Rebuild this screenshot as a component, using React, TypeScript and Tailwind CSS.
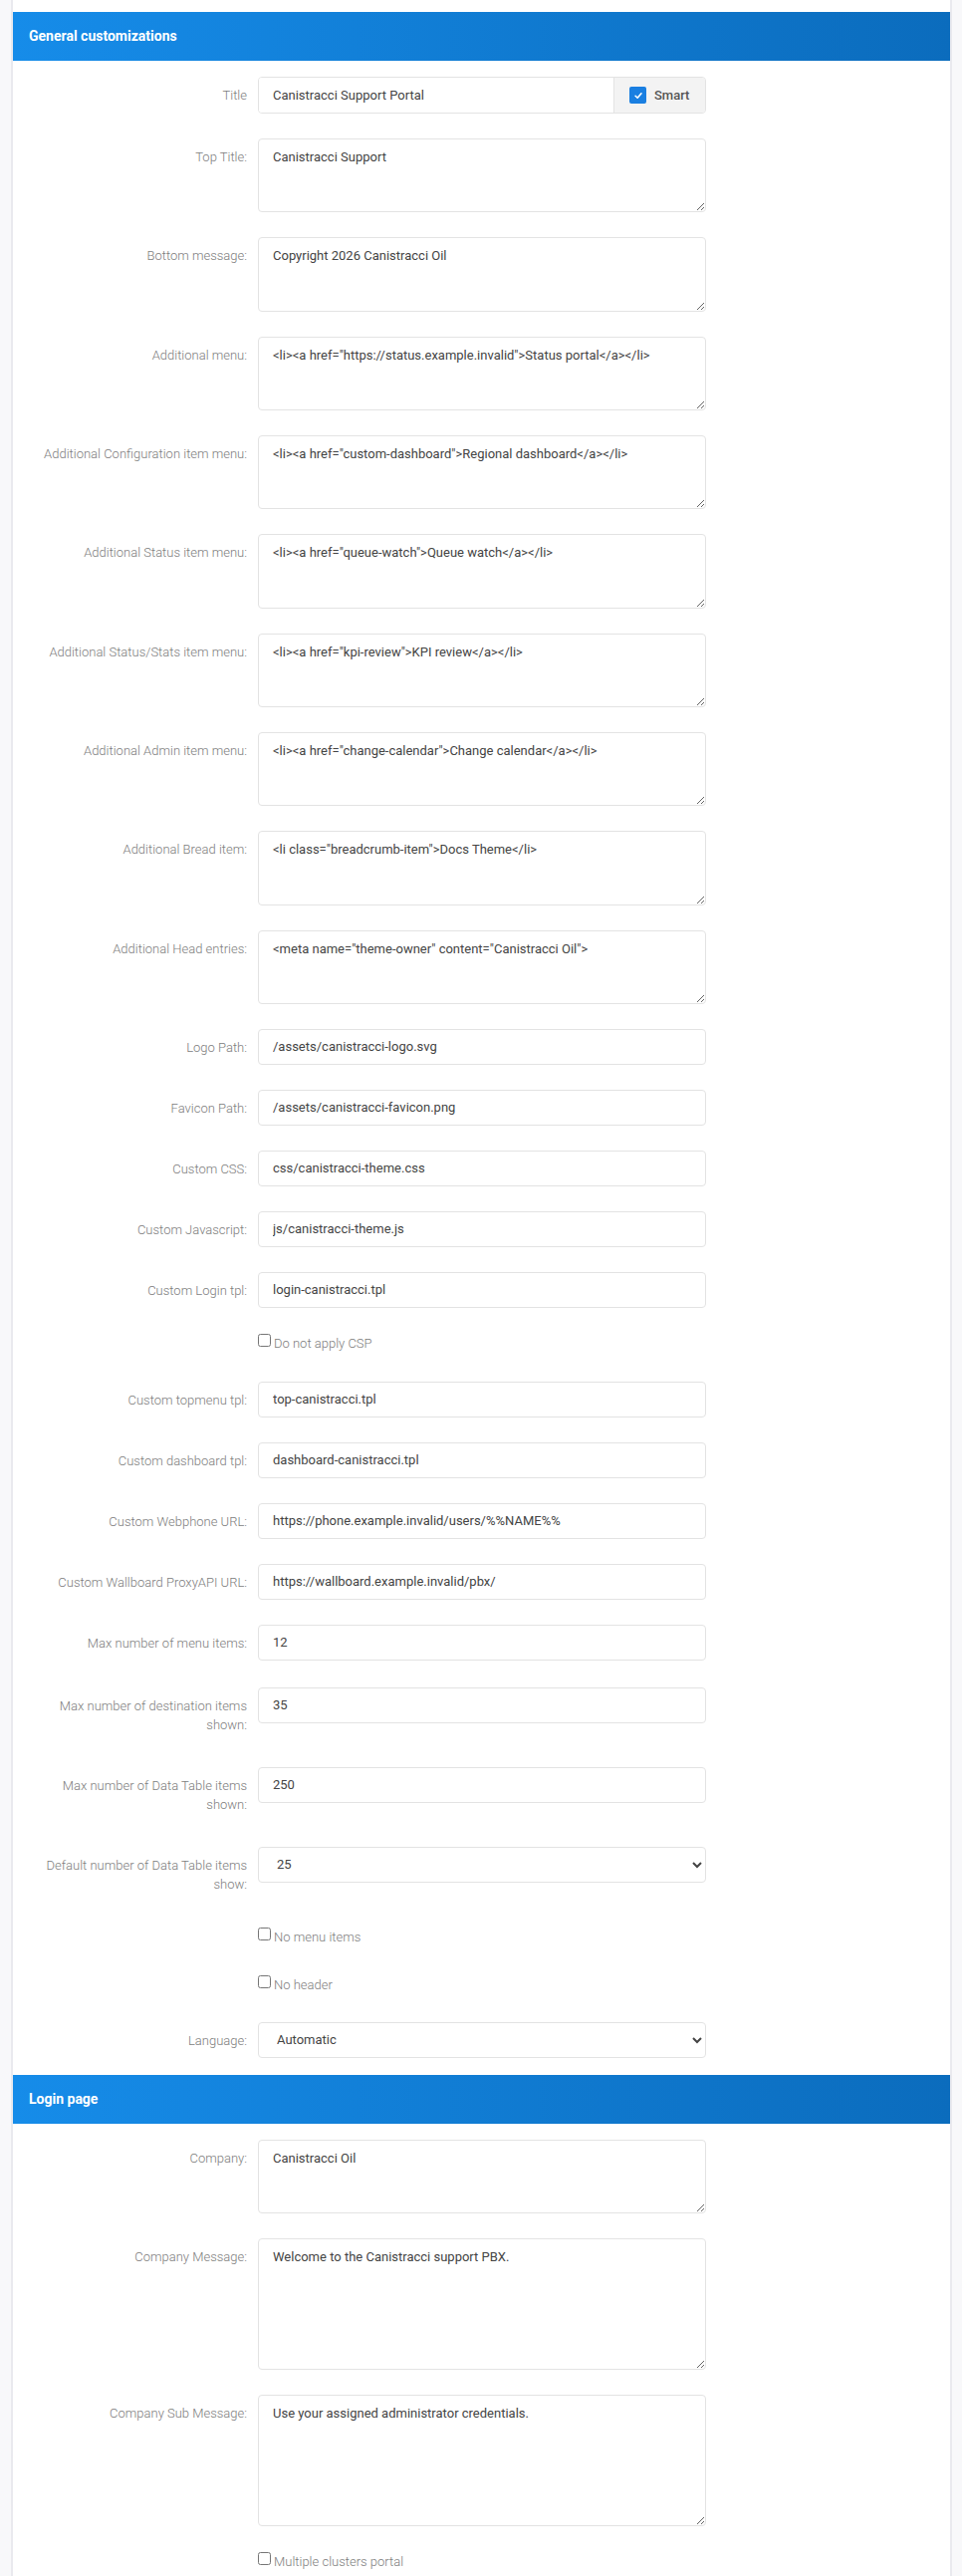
import React from "react";

type Row =
  | { kind: "title"; label: string; value: string }
  | { kind: "input"; label: string[]; value: string; gap?: string }
  | { kind: "textarea"; label: string[]; value: string; tall?: boolean }
  | { kind: "select"; label: string[]; value: string; options: string[] }
  | { kind: "check"; text: string; gap?: string };

const general: Row[] = [
  { kind: "title", label: "Title", value: "Canistracci Support Portal" },
  { kind: "textarea", label: ["Top Title:"], value: "Canistracci Support" },
  { kind: "textarea", label: ["Bottom message:"], value: "Copyright 2026 Canistracci Oil" },
  {
    kind: "textarea",
    label: ["Additional menu:"],
    value: '<li><a href="https://status.example.invalid">Status portal</a></li>',
  },
  {
    kind: "textarea",
    label: ["Additional Configuration item menu:"],
    value: '<li><a href="custom-dashboard">Regional dashboard</a></li>',
  },
  {
    kind: "textarea",
    label: ["Additional Status item menu:"],
    value: '<li><a href="queue-watch">Queue watch</a></li>',
  },
  {
    kind: "textarea",
    label: ["Additional Status/Stats item menu:"],
    value: '<li><a href="kpi-review">KPI review</a></li>',
  },
  {
    kind: "textarea",
    label: ["Additional Admin item menu:"],
    value: '<li><a href="change-calendar">Change calendar</a></li>',
  },
  {
    kind: "textarea",
    label: ["Additional Bread item:"],
    value: '<li class="breadcrumb-item">Docs Theme</li>',
  },
  {
    kind: "textarea",
    label: ["Additional Head entries:"],
    value: '<meta name="theme-owner" content="Canistracci Oil">',
  },
  { kind: "input", label: ["Logo Path:"], value: "/assets/canistracci-logo.svg" },
  { kind: "input", label: ["Favicon Path:"], value: "/assets/canistracci-favicon.png" },
  { kind: "input", label: ["Custom CSS:"], value: "css/canistracci-theme.css" },
  { kind: "input", label: ["Custom Javascript:"], value: "js/canistracci-theme.js" },
  { kind: "input", label: ["Custom Login tpl:"], value: "login-canistracci.tpl" },
  { kind: "check", text: "Do not apply CSP", gap: "mb-[26px]" },
  { kind: "input", label: ["Custom topmenu tpl:"], value: "top-canistracci.tpl" },
  { kind: "input", label: ["Custom dashboard tpl:"], value: "dashboard-canistracci.tpl" },
  {
    kind: "input",
    label: ["Custom Webphone URL:"],
    value: "https://phone.example.invalid/users/%%NAME%%",
  },
  {
    kind: "input",
    label: ["Custom Wallboard ProxyAPI URL:"],
    value: "https://wallboard.example.invalid/pbx/",
  },
  { kind: "input", label: ["Max number of menu items:"], value: "12", gap: "mb-[27px]" },
  { kind: "input", label: ["Max number of destination items", "shown:"], value: "35" },
  { kind: "input", label: ["Max number of Data Table items", "shown:"], value: "250" },
  {
    kind: "select",
    label: ["Default number of Data Table items", "show:"],
    value: "25",
    options: ["10", "25", "50", "100"],
  },
  { kind: "check", text: "No menu items" },
  { kind: "check", text: "No header" },
  {
    kind: "select",
    label: ["Language:"],
    value: "Automatic",
    options: ["Automatic", "English", "Italiano"],
  },
];

const login: Row[] = [
  { kind: "textarea", label: ["Company:"], value: "Canistracci Oil" },
  {
    kind: "textarea",
    label: ["Company Message:"],
    value: "Welcome to the Canistracci support PBX.",
    tall: true,
  },
  {
    kind: "textarea",
    label: ["Company Sub Message:"],
    value: "Use your assigned administrator credentials.",
    tall: true,
  },
  { kind: "check", text: "Multiple clusters portal" },
];

const control =
  "w-full rounded-[4px] border border-[#e3e3e3] bg-white px-[14px] text-[13px] text-[#444] outline-none";

const Label = ({ lines }: { lines: string[] }) => (
  <div className="w-[235px] shrink-0 whitespace-nowrap pb-[8px] pt-[9px] text-right text-[13px] font-light leading-[19px] text-[#7d7d7d]">
    {lines.map((l) => (
      <div key={l}>{l}</div>
    ))}
  </div>
);

const Field = ({ row, last }: { row: Row; last: boolean }) => {
  const custom = "gap" in row && row.gap ? row.gap : "mb-[25px]";
  const mb = last ? "" : custom;

  if (row.kind === "check") {
    return (
      <div className={`flex h-[23px] ${mb}`}>
        <div className="w-[235px] shrink-0" />
        <label className="ml-[11px] flex items-start gap-[3px] text-[13px] font-light text-[#7d7d7d]">
          <input type="checkbox" className="m-0 mt-[1px] h-[13px] w-[13px]" />
          <span className="pt-[1px] leading-[19px]">{row.text}</span>
        </label>
      </div>
    );
  }

  if (row.kind === "title") {
    return (
      <div className={`flex ${mb}`}>
        <Label lines={[row.label]} />
        <div className="ml-[11px] flex h-[37px] w-[450px] overflow-hidden rounded-[4px] border border-[#e3e3e3]">
          <input
            defaultValue={row.value}
            className="h-full min-w-0 flex-1 bg-white px-[14px] text-[13px] text-[#444] outline-none"
          />
          <div className="flex w-[92px] items-center gap-[8px] border-l border-[#e3e3e3] bg-[#f3f3f3] pl-[15px]">
            <span className="flex h-[17px] w-[17px] items-center justify-center rounded-[2px] bg-[#1a7fe1]">
              <svg viewBox="0 0 12 12" className="h-[10px] w-[10px]">
                <path
                  d="M2.5 6.3 L5 8.7 L9.6 3.4"
                  fill="none"
                  stroke="white"
                  strokeWidth="1.9"
                  strokeLinecap="round"
                  strokeLinejoin="round"
                />
              </svg>
            </span>
            <span className="text-[13px] font-medium text-[#555]">Smart</span>
          </div>
        </div>
      </div>
    );
  }

  return (
    <div className={`flex ${mb}`}>
      <Label lines={row.label} />
      <div className="ml-[11px] w-[450px] shrink-0">
        {row.kind === "input" && (
          <input defaultValue={row.value} className={`${control} h-[36px]`} />
        )}
        {row.kind === "textarea" && (
          <textarea
            defaultValue={row.value}
            className={`${control} block pt-[8px] leading-[19px] ${
              row.tall ? "h-[132px]" : "h-[74.33px]"
            }`}
          />
        )}
        {row.kind === "select" && (
          <select defaultValue={row.value} className={`${control} h-[36px] pr-[8px]`}>
            {row.options.map((o) => (
              <option key={o}>{o}</option>
            ))}
          </select>
        )}
      </div>
    </div>
  );
};

const Section = ({ title, rows }: { title: string; rows: Row[] }) => (
  <div>
    <div className="flex h-[49px] items-center bg-linear-to-r from-[#168ce9] to-[#0b6cbd] pl-[16px] text-[14px] font-bold text-white">
      {title}
    </div>
    <div className="pb-[17px] pt-[16px]">
      {rows.map((r, i) => (
        <Field key={i} row={r} last={i === rows.length - 1} />
      ))}
    </div>
  </div>
);

export default function App() {
  return (
    <div
      className="min-h-[2586px] bg-[#f8f8fa] pl-[11px] pr-[10px]"
      style={{ fontFamily: "Roboto, 'Liberation Sans', sans-serif" }}
    >
      <div className="min-h-[2586px] border-x-2 border-[#e9e9ee] bg-white pt-[12px]">
        <Section title="General customizations" rows={general} />
        <Section title="Login page" rows={login} />
      </div>
    </div>
  );
}
